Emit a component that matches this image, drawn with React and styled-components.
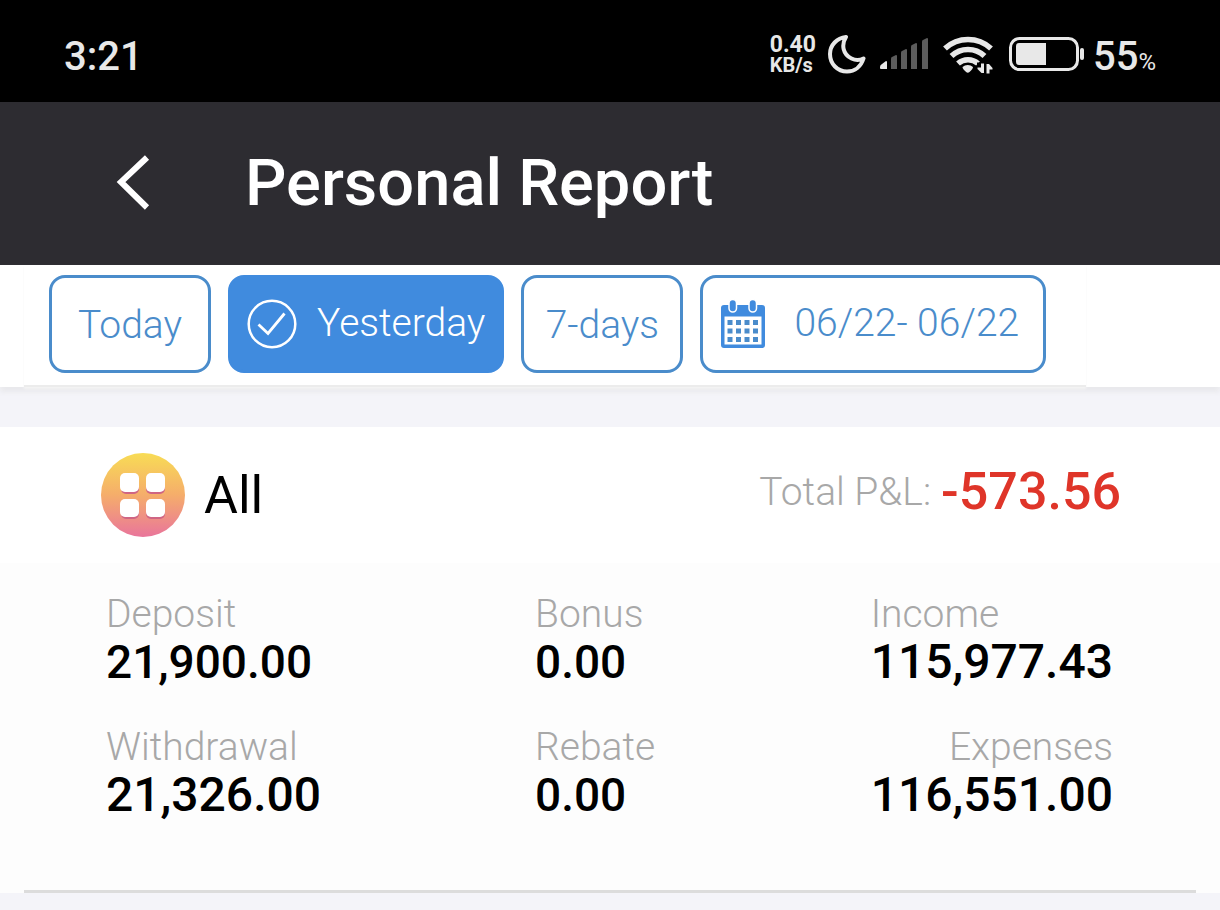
import React, { useState } from "react";
import styled, { createGlobalStyle, css } from "styled-components";

const metrics = [
    { label: "Deposit", value: "21,900.00" },
    { label: "Bonus", value: "0.00" },
    { label: "Income", value: "115,977.43", wide: true },
    { label: "Withdrawal", value: "21,326.00", wide: true },
    { label: "Rebate", value: "0.00" },
    { label: "Expenses", value: "116,551.00", wide: true, end: true },
];

const MoonIcon = () => (
    <svg width="38" height="40" viewBox="0 0 38 40" fill="none">
        <path
            d="M18 3C9 4 2 11 2 20c0 10 7.500 17.500 17 17.500 8 0 14-5 16.500-13-4 2-8 2-12 0C15 20.500 13 11 18 3z"
            stroke="#e8e8e8"
            strokeWidth="4"
            strokeLinejoin="round"
        />
    </svg>
);

const SignalIcon = () => (
    <svg width="49" height="32" viewBox="0 0 49 32">
        <path d="M0 29q0-2 2-3l4-3q1 0 1 1v7H1q-1 0-1-1z" fill="#e8e8e8" />
        <g fill="#5c5c5c">
            <path d="M11 31V21q0-2 1-2l4-2q1 0 1 1v13z" />
            <path d="M21 31V15q0-2 1-2l4-2q1 0 1 1v19z" />
            <path d="M31 31V9q0-2 1-2l4-2q1 0 1 1v25z" />
            <path d="M42 31V4q0-2 1-2l4-2q1 0 1 1v30z" />
        </g>
    </svg>
);

const WifiIcon = () => (
    <svg width="50" height="39" viewBox="0 0 50 39" fill="none">
        <g stroke="#e8e8e8" strokeWidth="5.600">
            <path d="M2 13.500a34 34 0 0 1 46 0" />
            <path d="M8.500 21a24 24 0 0 1 33 0" />
            <path d="M15 28.500a15 15 0 0 1 20 0" />
        </g>
        <path d="M19.500 32a8 8 0 0 1 10.500 0q0 2-3.500 5-1.700 1.600-3.400 0-3.600-3-3.600-5z" fill="#e8e8e8" />
        <path d="M34 27.500h16V39H34z" fill="#000" />
        <path
            d="M38 28.500h3V38h-2.500L34.500 34v-1.500H38zM43.500 38.500V29H46l3.500 4v1.500h-3v4z"
            fill="#e8e8e8"
        />
    </svg>
);

const BatteryIcon = () => (
    <svg width="76" height="34" viewBox="0 0 76 34">
        <rect x="1.500" y="1.500" width="67" height="31" rx="9" fill="none" stroke="#e8e8e8" strokeWidth="3" />
        <path d="M10 6h27v22H10q-3 0-3-3V9q0-3 3-3z" fill="#e8e8e8" />
        <rect x="71" y="11" width="4" height="12" rx="2" fill="#e8e8e8" />
    </svg>
);

const BackIcon = () => (
    <svg width="34" height="56" viewBox="0 0 34 56" fill="none">
        <path d="M31 2.500 5 27l26 25.500" stroke="#fff" strokeWidth="6" />
    </svg>
);

const CheckIcon = () => (
    <svg width="50" height="50" viewBox="0 0 50 50" fill="none" stroke="#fff">
        <circle cx="25" cy="25" r="23.300" strokeWidth="2.500" />
        <path d="m11.500 25.500 9.500 9 16.500-20" strokeWidth="2.800" />
    </svg>
);

const CalendarIcon = () => (
    <svg width="46" height="50" viewBox="0 0 46 50">
        <path
            fillRule="evenodd"
            d="M4 6h38q3 0 3 3v37q0 3-3 3H4q-3 0-3-3V9q0-3 3-3zM4.500 17.500v28h37v-28z"
            fill="#408bde"
        />
        <g fill="#408bde" stroke="#fff" strokeWidth="1.500">
            <rect x="9" y="0.500" width="7.500" height="12.500" rx="3.700" />
            <rect x="29" y="0.500" width="7.500" height="12.500" rx="3.700" />
        </g>
        <g fill="#4a8ccb">
            {[21, 29.5, 38].map((y) =>
                [7.5, 16, 24.5, 33].map((x) => (
                    <rect key={`${x}-${y}`} x={x} y={y} width="5" height="5" />
                ))
            )}
        </g>
    </svg>
);

const AllIcon = () => (
    <svg width="84" height="84" viewBox="0 0 84 84">
        <defs>
            <linearGradient id="sunset" x1="0" y1="0" x2="0" y2="1">
                <stop offset="0" stopColor="#f8dc55" />
                <stop offset="0.5" stopColor="#f5ad6b" />
                <stop offset="1" stopColor="#e9759b" />
            </linearGradient>
        </defs>
        <circle cx="42" cy="42" r="42" fill="url(#sunset)" />
        <g fill="#cf6583">
            <rect x="20" y="22" width="18" height="19" rx="5" />
            <rect x="45" y="22" width="19" height="19" rx="5" />
            <rect x="20" y="48" width="18" height="18" rx="5" />
            <rect x="45" y="48" width="19" height="18" rx="5" />
        </g>
        <g fill="#fff">
            <rect x="19" y="20" width="19" height="19" rx="5" />
            <rect x="45" y="20" width="19" height="19" rx="5" />
            <rect x="19" y="46" width="19" height="18" rx="5" />
            <rect x="45" y="46" width="19" height="18" rx="5" />
        </g>
    </svg>
);

const App = () => {
    const [range, setRange] = useState("yesterday");

    return (
        <>
            <GlobalStyle />
            <StatusBar>
                <Clock>3:21</Clock>
                <StatusIcons>
                    <NetSpeed>
                        <span>0.40</span>
                        <small>KB/s</small>
                    </NetSpeed>
                    <MoonIcon />
                    <SignalIcon />
                    <WifiIcon />
                    <Battery>
                        <BatteryIcon />
                        <BatteryText>
                            55<small>%</small>
                        </BatteryText>
                    </Battery>
                </StatusIcons>
            </StatusBar>

            <Header>
                <BackButton aria-label="Back">
                    <BackIcon />
                </BackButton>
                <Title>Personal Report</Title>
            </Header>

            <FilterBar>
                <FilterList>
                    <FilterButton
                        $active={range === "today"}
                        onClick={() => setRange("today")}
                    >
                        Today
                    </FilterButton>
                    <FilterButton
                        $icon
                        $active={range === "yesterday"}
                        onClick={() => setRange("yesterday")}
                    >
                        {range === "yesterday" && <CheckIcon />}
                        <span>Yesterday</span>
                    </FilterButton>
                    <FilterButton
                        $active={range === "week"}
                        onClick={() => setRange("week")}
                    >
                        7-days
                    </FilterButton>
                    <FilterButton $icon $date>
                        <CalendarIcon />
                        <span>06/22- 06/22</span>
                    </FilterButton>
                </FilterList>
            </FilterBar>

            <Report>
                <ReportHead>
                    <AllIcon />
                    <ReportName>All</ReportName>
                    <Total>
                        <span>Total P&amp;L:</span>
                        <strong>-573.56</strong>
                    </Total>
                </ReportHead>
                <MetricGrid>
                    {metrics.map((m) => (
                        <Metric key={m.label} $end={m.end}>
                            <dt>{m.label}</dt>
                            <MetricValue $wide={m.wide}>{m.value}</MetricValue>
                        </Metric>
                    ))}
                </MetricGrid>
                <Divider />
            </Report>
        </>
    );
};

const GlobalStyle = createGlobalStyle`
    * {
        box-sizing: border-box;
    }

    body {
        margin: 0;
        background: #f4f4f9;
        color: #000;
        font-family: Roboto, "Liberation Sans", sans-serif;
    }

    svg {
        display: block;
        flex-shrink: 0;
    }
`;

const StatusBar = styled.div`
    display: flex;
    align-items: center;
    justify-content: space-between;
    height: 102px;
    padding: 6px 64px 0;
    background: #000;
    color: #e8e8e8;
`;

const Clock = styled.span`
    padding-top: 4px;
    font-size: 40px;
    font-weight: 500;
`;

const StatusIcons = styled.div`
    display: flex;
    align-items: center;
    gap: 14px;
`;

const NetSpeed = styled.div`
    display: flex;
    flex-direction: column;
    margin-right: -2px;
    padding-top: 2px;
    font-size: 23px;
    font-weight: 700;
    line-height: 20px;

    & small {
        font-size: 20px;
    }
`;

const Battery = styled.div`
    display: flex;
    align-items: center;
    gap: 8px;
    margin-left: 2px;
`;

const BatteryText = styled.span`
    padding-top: 4px;
    font-size: 40px;
    font-weight: 500;

    & small {
        font-size: 24px;
        font-weight: 400;
    }
`;

const Header = styled.header`
    display: flex;
    align-items: center;
    gap: 95px;
    height: 163px;
    padding: 0 116px 2px;
    background: #2d2c31;
    color: #fff;
`;

const BackButton = styled.button`
    padding: 0;
    border: none;
    background: none;
    cursor: pointer;
`;

const Title = styled.h1`
    margin: 0;
    font-size: 65px;
    font-weight: 500;
`;

const FilterBar = styled.nav`
    padding: 0 24px;
    background: #fff;
    box-shadow: 0 5px 5px #e9e9ec;
`;

const FilterList = styled.div`
    display: flex;
    gap: 17px;
    width: max-content;
    padding: 10px 40px 12px 25px;
    border-bottom: 2px solid #ececec;
    box-shadow: 0 2px 2px #f4f4f4;
`;

const FilterButton = styled.button`
    display: flex;
    align-items: center;
    justify-content: center;
    height: 98px;
    min-width: 162px;
    padding: 2px 16px 0;
    border: 3px solid #4a8ccb;
    border-radius: 16px;
    background: #fff;
    color: #4a8ccb;
    font-family: inherit;
    font-size: 39px;
    font-weight: 300;
    cursor: pointer;

    ${({ $icon }) =>
        $icon &&
        css`
            gap: 20px;
            padding-top: 0;

            & span {
                padding-bottom: 3px;
            }
        `}

    ${({ $date }) =>
        $date &&
        css`
            gap: 28px;
            padding: 0 24px 0 17px;
        `}

    ${({ $active }) =>
        $active &&
        css`
            border-color: #408bde;
            background: #408bde;
            color: #fff;
        `}
`;

const Report = styled.main`
    margin-top: 40px;
    background: #fdfdfd;
`;

const ReportHead = styled.div`
    display: flex;
    align-items: center;
    padding: 26px 99px 26px 101px;
    background: #fff;
`;

const ReportName = styled.h2`
    margin: 0 0 0 19px;
    font-size: 52px;
    font-weight: 400;
`;

const Total = styled.div`
    display: flex;
    align-items: center;
    gap: 10px;
    margin-left: auto;
    padding-bottom: 7px;
    color: #a8a8a8;
    font-size: 39px;
    font-weight: 300;

    & strong {
        color: #df3529;
        font-size: 52px;
        font-weight: 500;
    }
`;

const MetricGrid = styled.dl`
    display: grid;
    grid-template-columns: 429px 1fr auto;
    row-gap: 37px;
    margin: 0;
    padding: 27px 107px 71px 106px;
`;

const Metric = styled.div`
    text-align: ${({ $end }) => ($end ? "right" : "left")};
    line-height: 48px;

    & dt {
        color: #a8a8a8;
        font-size: 39px;
        font-weight: 300;
    }
`;

const MetricValue = styled.dd`
    margin: 0;
    font-size: ${({ $wide }) => ($wide ? "48px" : "46px")};
    font-weight: 500;
`;

const Divider = styled.hr`
    height: 3px;
    margin: 0 24px;
    border: none;
    background: #dcdcdc;
`;

export default App;
